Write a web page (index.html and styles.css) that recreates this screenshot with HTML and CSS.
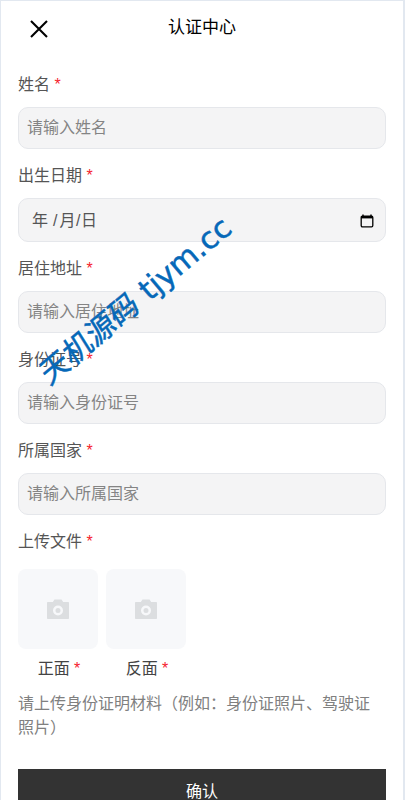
FILE: index.html
```html
<!DOCTYPE html>
<html lang="zh-CN">
<head>
<meta charset="utf-8">
<title>认证中心</title>
<link rel="stylesheet" href="styles.css">
</head>
<body>
<div class="page">
  <header class="topbar">
    <svg class="close" viewBox="0 0 18 18" width="18" height="18"><path d="M1 1L17 17M17 1L1 17" fill="none" stroke="#000" stroke-width="2.1"/></svg>
    <h1 class="title">认证中心</h1>
  </header>
  <form class="form">
    <div class="field">
      <div class="label">姓名 <span class="req">*</span></div>
      <div class="input placeholder">请输入姓名</div>
    </div>
    <div class="field">
      <div class="label">出生日期 <span class="req">*</span></div>
      <div class="input date"><span class="date-text">年<span class="sep">/</span>月<span class="sep sep-tight">/</span>日</span>
        <svg class="cal" viewBox="0 0 14 14" width="14" height="14"><path d="M3 0.5V2.5M11 0.5V2.5" stroke="#000" stroke-width="1.4"/><rect x="1.2" y="2.2" width="11.6" height="10.6" rx="1.2" fill="none" stroke="#000" stroke-width="1.3"/><rect x="1.2" y="2" width="11.6" height="2.4" fill="#000"/></svg>
      </div>
    </div>
    <div class="field">
      <div class="label">居住地址 <span class="req">*</span></div>
      <div class="input placeholder">请输入居住地址</div>
    </div>
    <div class="field">
      <div class="label">身份证号 <span class="req">*</span></div>
      <div class="input placeholder">请输入身份证号</div>
    </div>
    <div class="field">
      <div class="label">所属国家 <span class="req">*</span></div>
      <div class="input placeholder">请输入所属国家</div>
    </div>
    <div class="field">
      <div class="label label-upload">上传文件 <span class="req">*</span></div>
      <div class="uploads">
        <div class="upload">
          <div class="tile"><svg viewBox="0 0 22 20" width="22" height="20"><path fill-rule="evenodd" fill="#dcdee0" d="M7.5 0.5H14.5L16.2 3H21.3A.7.7 0 0 1 22 3.7V19.3A.7.7 0 0 1 21.3 20H.7A.7.7 0 0 1 0 19.3V3.7A.7.7 0 0 1 .7 3H5.8ZM11 6.5A5 5 0 1 0 11 16.5A5 5 0 1 0 11 6.5ZM11 9A2.5 2.5 0 1 1 11 14A2.5 2.5 0 1 1 11 9Z"/></svg></div>
          <div class="cap">正面 <span class="req">*</span></div>
        </div>
        <div class="upload">
          <div class="tile"><svg viewBox="0 0 22 20" width="22" height="20"><path fill-rule="evenodd" fill="#dcdee0" d="M7.5 0.5H14.5L16.2 3H21.3A.7.7 0 0 1 22 3.7V19.3A.7.7 0 0 1 21.3 20H.7A.7.7 0 0 1 0 19.3V3.7A.7.7 0 0 1 .7 3H5.8ZM11 6.5A5 5 0 1 0 11 16.5A5 5 0 1 0 11 6.5ZM11 9A2.5 2.5 0 1 1 11 14A2.5 2.5 0 1 1 11 9Z"/></svg></div>
          <div class="cap">反面 <span class="req">*</span></div>
        </div>
      </div>
      <p class="hint">请上传身份证明材料（例如：身份证照片、驾驶证照片）</p>
    </div>
    <button class="submit" type="button">确认</button>
  </form>
  <div class="watermark"><span class="wm-cjk">天机源码</span> tjym.cc</div>
</div>
</body>
</html>
```
FILE: styles.css
```css
* { box-sizing: border-box; }
html, body { margin: 0; padding: 0; height: 800px; overflow: hidden; }
body { background: #e2e8f0; padding: 1px 0 0 0; font-family: "Liberation Sans", "Noto Sans CJK SC", sans-serif; }
.page { position: relative; background: #fff; height: 799px; overflow: hidden; margin-right: 2px; margin-left: 1px; }
.topbar { position: relative; height: 71px; display: flex; justify-content: center; }
.close { position: absolute; left: 29px; top: 19px; }
.title { margin: 0; font-size: 17px; font-weight: 400; color: #000; line-height: 54px; height: 54px; }
.form { padding: 0 17px; }
.field { margin-bottom: 14px; }
.label { font-size: 16px; line-height: 26px; color: #555; margin-bottom: 9px; }
.label-upload { margin-bottom: 14px; }
.req { color: #f5222d; }
.input { height: 42px; border: 1px solid #e5e7eb; border-radius: 10px; background: #f4f4f5; font-size: 16px; line-height: 40px; padding: 0 8px; }
.placeholder { color: #848484; }
.date { height: 44px; color: #555; padding: 2px 11px 0 13px; display: flex; align-items: center; justify-content: space-between; }
.sep { margin: 0 2px 0 5px; }
.sep-tight { margin: 0 .5px; }
.uploads { display: flex; gap: 8px; }
.upload { width: 80px; }
.tile { width: 80px; height: 80px; border-radius: 8px; background: #f7f8fa; display: flex; align-items: center; justify-content: center; }
.cap { text-align: center; padding-left: 2px; font-size: 16px; line-height: 26px; color: #444; margin-top: 7px; }
.hint { margin: 10px 0 0; max-width: 360px; font-size: 16px; line-height: 24px; color: #808080; }
.submit { display: block; width: 100%; height: 42px; margin-top: 29px; border: 0; background: #333; color: #fff; font: inherit; font-size: 16px; }
.watermark { position: absolute; left: 13px; top: 275px; transform: rotate(-40deg); white-space: nowrap; font-family: "DejaVu Sans", "Noto Sans CJK SC", sans-serif; font-size: 30px; color: #0568b8; -webkit-text-stroke: 0.5px #0568b8; }
.wm-cjk { display: inline-block; transform: skewX(-8deg); }
```
